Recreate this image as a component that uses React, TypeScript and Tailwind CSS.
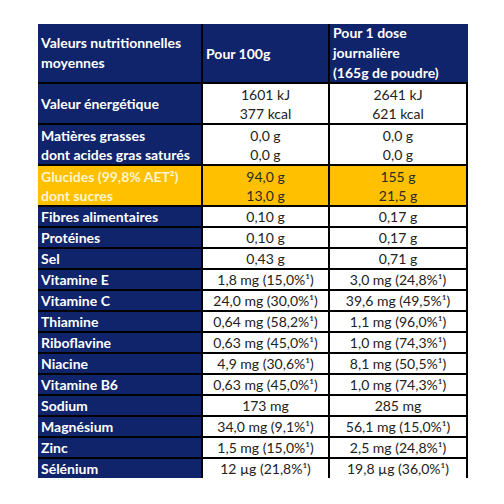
import React from "react";

type Row = { label: React.ReactNode[]; a: string[]; b: string[]; yellow?: boolean };

const rows: Row[] = [
  { label: ["Valeur énergétique"], a: ["1601 kJ", "377 kcal"], b: ["2641 kJ", "621 kcal"] },
  { label: ["Matières grasses", "dont acides gras saturés"], a: ["0,0 g", "0,0 g"], b: ["0,0 g", "0,0 g"] },
  { label: ["Glucides (99,8% AET²)", "dont sucres"], a: ["94,0 g", "13,0 g"], b: ["155 g", "21,5 g"], yellow: true },
  { label: ["Fibres alimentaires"], a: ["0,10 g"], b: ["0,17 g"] },
  { label: ["Protéines"], a: ["0,10 g"], b: ["0,17 g"] },
  { label: ["Sel"], a: ["0,43 g"], b: ["0,71 g"] },
  { label: ["Vitamine E"], a: ["1,8 mg (15,0%¹)"], b: ["3,0 mg (24,8%¹)"] },
  { label: ["Vitamine C"], a: ["24,0 mg (30,0%¹)"], b: ["39,6 mg (49,5%¹)"] },
  { label: ["Thiamine"], a: ["0,64 mg (58,2%¹)"], b: ["1,1 mg (96,0%¹)"] },
  { label: ["Riboflavine"], a: ["0,63 mg (45,0%¹)"], b: ["1,0 mg (74,3%¹)"] },
  { label: ["Niacine"], a: ["4,9 mg (30,6%¹)"], b: ["8,1 mg (50,5%¹)"] },
  { label: ["Vitamine B6"], a: ["0,63 mg (45,0%¹)"], b: ["1,0 mg (74,3%¹)"] },
  { label: ["Sodium"], a: ["173 mg"], b: ["285 mg"] },
  { label: ["Magnésium"], a: ["34,0 mg (9,1%¹)"], b: ["56,1 mg (15,0%¹)"] },
  { label: ["Zinc"], a: ["1,5 mg (15,0%¹)"], b: ["2,5 mg (24,8%¹)"] },
  { label: ["Sélénium"], a: ["12 µg (21,8%¹)"], b: ["19,8 µg (36,0%¹)"] },
];

export default function App() {
  return (
    <div className="w-[504px] h-[504px] bg-white pt-[24px] pl-[38px]">
      <div
        className="w-[430px] grid grid-cols-[163px_125px_138px] gap-[2px] bg-black text-[14px] leading-[19px]"
        style={{ fontFamily: "Lato, 'Open Sans', sans-serif" }}
      >
        <div className="bg-[#0f246a] h-[58px] flex flex-col justify-center pl-[3px] font-bold text-white leading-[20px]">
          <span>Valeurs nutritionnelles</span>
          <span>moyennes</span>
        </div>
        <div className="bg-[#0f246a] h-[58px] flex flex-col justify-center pl-[3px] font-bold text-white">
          <span>Pour 100g</span>
        </div>
        <div className="bg-[#0f246a] h-[58px] flex flex-col justify-center pl-[3px] font-bold text-white leading-[20px]">
          <span>Pour 1 dose</span>
          <span>journalière</span>
          <span>(165g de poudre)</span>
        </div>
        {rows.map((r, i) => {
          const h = r.a.length > 1 ? "h-[39px]" : "h-[19px]";
          const left = r.yellow ? "bg-[#ffc000] text-[#fff5d0]" : "bg-[#0f246a] text-white";
          const right = r.yellow ? "bg-[#ffc000] text-[#2a2a2a]" : "bg-white text-[#222222]";
          return (
            <React.Fragment key={i}>
              <div className={`${h} ${left} font-bold flex flex-col justify-center pl-[3px] whitespace-nowrap`}>
                {r.label.map((l, j) => (
                  <span key={j}>{l}</span>
                ))}
              </div>
              <div className={`${h} ${right} flex flex-col justify-center items-center whitespace-nowrap`}>
                {r.a.map((l, j) => (
                  <span key={j}>{l}</span>
                ))}
              </div>
              <div className={`${h} ${right} border-r-2 border-black flex flex-col justify-center items-center whitespace-nowrap`}>
                {r.b.map((l, j) => (
                  <span key={j}>{l}</span>
                ))}
              </div>
            </React.Fragment>
          );
        })}
      </div>
    </div>
  );
}
